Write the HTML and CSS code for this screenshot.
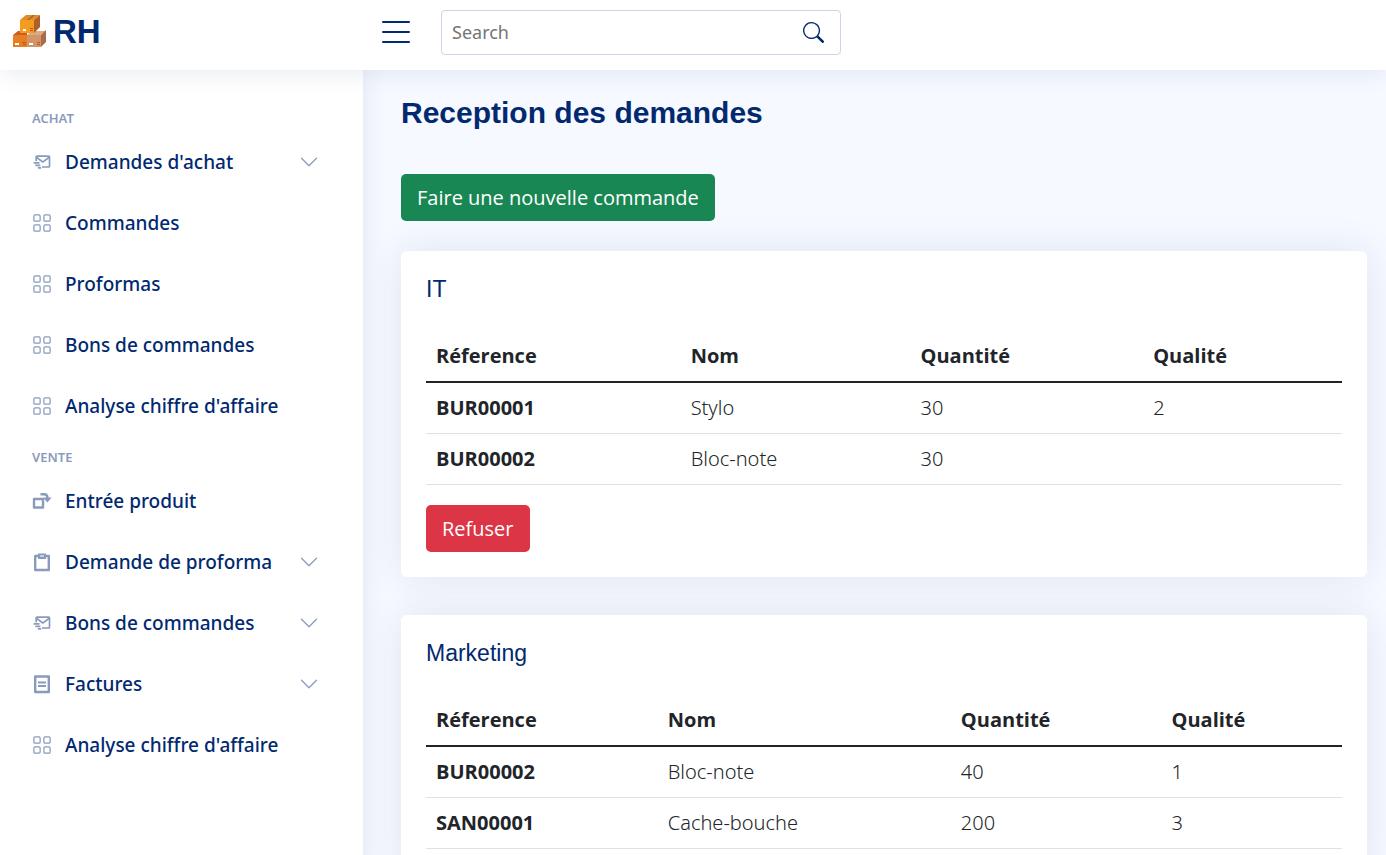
FILE: index.html
```html
<!DOCTYPE html>
<html lang="fr">
<head>
<meta charset="utf-8">
<title>RH - Reception des demandes</title>
<link rel="stylesheet" href="styles.css">
</head>
<body>
<svg class="sprite" aria-hidden="true">
  <symbol id="grid" viewBox="0 0 16 16"><g fill="none" stroke="currentColor"><rect x="1.5" y="1.5" width="5" height="5" rx="1"/><rect x="9.5" y="1.5" width="5" height="5" rx="1"/><rect x="1.5" y="9.5" width="5" height="5" rx="1"/><rect x="9.5" y="9.5" width="5" height="5" rx="1"/></g></symbol>
  <symbol id="mail" viewBox="0 0 24 24"><path fill="currentColor" d="M20 4H6c-1.103 0-2 .897-2 2v5h2V8l6.4 4.8a1 1 0 0 0 1.2 0L20 8v9h-8v2h8c1.103 0 2-.897 2-2V6c0-1.103-.897-2-2-2zm-7 6.75L6.666 6h12.668L13 10.75zM2 12h7v2H2zm2 3h6v2H4zm3 3h4v2H7z"/></symbol>
  <symbol id="chevron" viewBox="0 0 16 16"><path fill="none" stroke="currentColor" stroke-linecap="round" stroke-linejoin="round" d="M2 5l6 6 6-6"/></symbol>
  <symbol id="export" viewBox="0 0 20 20"><path fill="none" stroke="currentColor" stroke-width="2.400" stroke-linejoin="round" d="M2 8h9v8.500H2zM8.500 3.200H12q3.500 0 3.500 3.800"/><path fill="currentColor" d="M11 6.500h8.700l-4.300 5z"/></symbol>
  <symbol id="clipboard" viewBox="0 0 20 20"><path fill="none" stroke="currentColor" stroke-width="2.400" stroke-linejoin="round" d="M3.200 4h13.600v14H3.200z"/><path fill="currentColor" d="M6 1.500h8V7H6z"/><path fill="#fff" d="M8 3.500h4v1H8z"/></symbol>
  <symbol id="detail" viewBox="0 0 20 20"><path fill="none" stroke="currentColor" stroke-width="2.400" stroke-linejoin="round" d="M3.200 2.500h13.600V18H3.200z"/><path stroke="currentColor" stroke-width="2" d="M6 8.500h8M6 12h8"/></symbol>
</svg>

<header class="header">
  <div class="brand">
    <a class="logo" href="#">
      <svg class="logo-mark" viewBox="0 0 34 34" aria-hidden="true">
        <path fill="#e67e22" d="M0 20h14v12H0z"/><path fill="#cf5a24" d="M0 20l5-4h9v4z"/>
        <path fill="#d2956a" d="M14 20h14v12H14z"/><path fill="#dda983" d="M14 20l5-4h14l-5 4z"/><path fill="#a96c4a" d="M28 20l5-5v12l-5 5z"/>
        <path fill="#f39c1f" d="M7 5h14v13H7z"/><path fill="#e28a24" d="M7 5l6-5h14l-6 5z"/><path fill="#af6029" d="M21 5l6-5v12l-6 6z"/>
        <path fill="#a4622d" d="M14 5l6-5h2l-6 5z"/><path fill="#fff" d="M10 14h3v2h-3zM2 28h4v2H2zM16 28h4v2h-4z"/><path fill="#ca4e28" d="M17 13h3v1h-3zM17 15h3v1h-3zM9 27h4v1H9zM10 29h3v1h-3zM24 27h3v1h-3zM24 29h3v1h-3z"/>
      </svg>
      <span>RH</span>
    </a>
    <button class="menu-toggle" type="button" aria-label="Menu"><svg viewBox="0 0 28 24"><path stroke="currentColor" stroke-width="2" stroke-linecap="round" d="M1 2h26M1 12h26M1 22h26"/></svg></button>
  </div>
  <form class="search">
    <input type="text" placeholder="Search" aria-label="Search">
    <button type="button" aria-label="Lancer la recherche"><svg viewBox="0 0 16 16"><path fill="currentColor" d="M11.742 10.344a6.500 6.500 0 1 0-1.397 1.398h-.001c.03.04.062.078.098.115l3.850 3.850a1 1 0 0 0 1.415-1.414l-3.850-3.850a1.007 1.007 0 0 0-.115-.1zM12 6.500a5.500 5.500 0 1 1-11 0 5.500 5.500 0 0 1 11 0z"/></svg></button>
  </form>
</header>

<div class="layout">
  <nav class="sidebar">
    <h2 class="nav-heading">ACHAT</h2>
    <ul class="nav-list">
      <li><a href="#"><svg><use href="#mail"/></svg><span>Demandes d'achat</span><svg class="chevron"><use href="#chevron"/></svg></a></li>
      <li><a href="#"><svg><use href="#grid"/></svg><span>Commandes</span></a></li>
      <li><a href="#"><svg><use href="#grid"/></svg><span>Proformas</span></a></li>
      <li><a href="#"><svg><use href="#grid"/></svg><span>Bons de commandes</span></a></li>
      <li><a href="#"><svg><use href="#grid"/></svg><span>Analyse chiffre d'affaire</span></a></li>
    </ul>
    <h2 class="nav-heading">VENTE</h2>
    <ul class="nav-list">
      <li><a href="#"><svg><use href="#export"/></svg><span>Entrée produit</span></a></li>
      <li><a href="#"><svg><use href="#clipboard"/></svg><span>Demande de proforma</span><svg class="chevron"><use href="#chevron"/></svg></a></li>
      <li><a href="#"><svg><use href="#mail"/></svg><span>Bons de commandes</span><svg class="chevron"><use href="#chevron"/></svg></a></li>
      <li><a href="#"><svg><use href="#detail"/></svg><span>Factures</span><svg class="chevron"><use href="#chevron"/></svg></a></li>
      <li><a href="#"><svg><use href="#grid"/></svg><span>Analyse chiffre d'affaire</span></a></li>
    </ul>
  </nav>

  <main class="content">
    <h1>Reception des demandes</h1>
    <a class="btn btn-success" href="#">Faire une nouvelle commande</a>

    <section class="card">
      <h2>IT</h2>
      <table class="table-it">
        <thead><tr><th scope="col">Réference</th><th scope="col">Nom</th><th scope="col">Quantité</th><th scope="col">Qualité</th></tr></thead>
        <tbody>
          <tr><th scope="row">BUR00001</th><td>Stylo</td><td>30</td><td>2</td></tr>
          <tr><th scope="row">BUR00002</th><td>Bloc-note</td><td>30</td><td></td></tr>
        </tbody>
      </table>
      <button class="btn btn-danger" type="button">Refuser</button>
    </section>

    <section class="card">
      <h2>Marketing</h2>
      <table class="table-marketing">
        <thead><tr><th scope="col">Réference</th><th scope="col">Nom</th><th scope="col">Quantité</th><th scope="col">Qualité</th></tr></thead>
        <tbody>
          <tr><th scope="row">BUR00002</th><td>Bloc-note</td><td>40</td><td>1</td></tr>
          <tr><th scope="row">SAN00001</th><td>Cache-bouche</td><td>200</td><td>3</td></tr>
        </tbody>
      </table>
    </section>
  </main>
</div>
</body>
</html>
```
FILE: styles.css
```css
* { box-sizing: border-box; }
body {
  margin: 0;
  background: #f6f9ff;
  color: #212529;
  font: 20px/30px "Open Sans", sans-serif;
}
a { text-decoration: none; }
button { border: 0; font: inherit; cursor: pointer; }
h1, h2, ul { margin: 0; padding: 0; }
ul { list-style: none; }
.sprite { display: none; }

.header {
  position: sticky;
  top: 0;
  z-index: 2;
  display: flex;
  align-items: center;
  height: 70px;
  padding: 0 13px 6px;
  background: #fff;
  box-shadow: 0 2px 25px rgba(1, 41, 112, .1);
}
.brand {
  display: flex;
  align-items: center;
  justify-content: space-between;
  width: 397px;
}
.logo {
  display: flex;
  align-items: center;
  gap: 6px;
  color: #012970;
  font: bold 33px/40px "Liberation Sans", Arial, sans-serif;
}
.logo-mark { width: 34px; height: 34px; }
.menu-toggle { padding: 0; background: none; color: #012970; }
.menu-toggle svg { display: block; width: 28px; height: 24px; }
.search {
  display: flex;
  align-items: center;
  width: 400px;
  height: 45px;
  margin-left: 31px;
  padding: 0 16px 0 10px;
  border: 1px solid #cdd4e6;
  border-radius: 4px;
}
.search input {
  flex: 1;
  min-width: 0;
  padding: 0;
  border: 0;
  outline: 0;
  color: #012970;
  font: 18px/28px "Noto Sans", sans-serif;
}
.search input::placeholder { color: #757575; }
.search button { padding: 0; background: none; color: #012970; }
.search svg { display: block; width: 21px; height: 21px; }

.layout { display: flex; min-height: calc(100vh - 70px); }
.sidebar {
  flex: 0 0 363px;
  padding: 35px 44px 25px 32px;
  background: #fff;
  box-shadow: 0 0 25px rgba(1, 41, 112, .1);
}
.nav-heading {
  padding: 3px 0 6px;
  color: #899bbd;
  font: 600 13px/20px "Noto Sans", sans-serif;
}
.nav-list { display: grid; gap: 6px; margin-bottom: 11px; }
.nav-list a {
  display: flex;
  align-items: center;
  height: 55px;
  color: #012970;
  font: 500 19px/28px "Noto Sans", sans-serif;
}
.nav-list svg { width: 20px; height: 20px; margin-right: 13px; color: #899bbd; }
.nav-list .chevron { margin: 0 0 0 auto; }

.content { flex: 1; min-width: 0; padding: 24px 19px 38px 38px; }
h1 {
  margin-bottom: 43px;
  color: #012970;
  font: bold 30px/37px "Liberation Sans", Arial, sans-serif;
}
.btn {
  display: inline-block;
  padding: 8px 16px;
  border-radius: 5px;
  color: #fff;
  line-height: 31px;
}
.btn-success { margin-bottom: 30px; background: #198754; }
.btn-danger { margin-top: 20px; background: #dc3545; }
.card {
  margin-bottom: 38px;
  padding: 25px;
  border-radius: 6px;
  background: #fff;
  box-shadow: 0 0 38px rgba(1, 41, 112, .1);
}
.card h2 {
  margin-bottom: 28px;
  color: #012970;
  font: 23px/27px "Liberation Sans", Arial, sans-serif;
}
table { width: 100%; table-layout: fixed; border-collapse: collapse; }
th, td { height: 51px; padding: 10px; border-bottom: 1px solid #dee2e6; text-align: left; }
th { font-weight: 700; }
td { font-family: "Noto Sans", sans-serif; font-weight: 300; }
thead th { border-bottom: 2px solid #212529; }
.table-it th:nth-child(1) { width: 27.8%; }
.table-it th:nth-child(2) { width: 25.1%; }
.table-it th:nth-child(3) { width: 25.4%; }
.table-marketing th:nth-child(1) { width: 25.3%; }
.table-marketing th:nth-child(2) { width: 32%; }
.table-marketing th:nth-child(3) { width: 23%; }
```
